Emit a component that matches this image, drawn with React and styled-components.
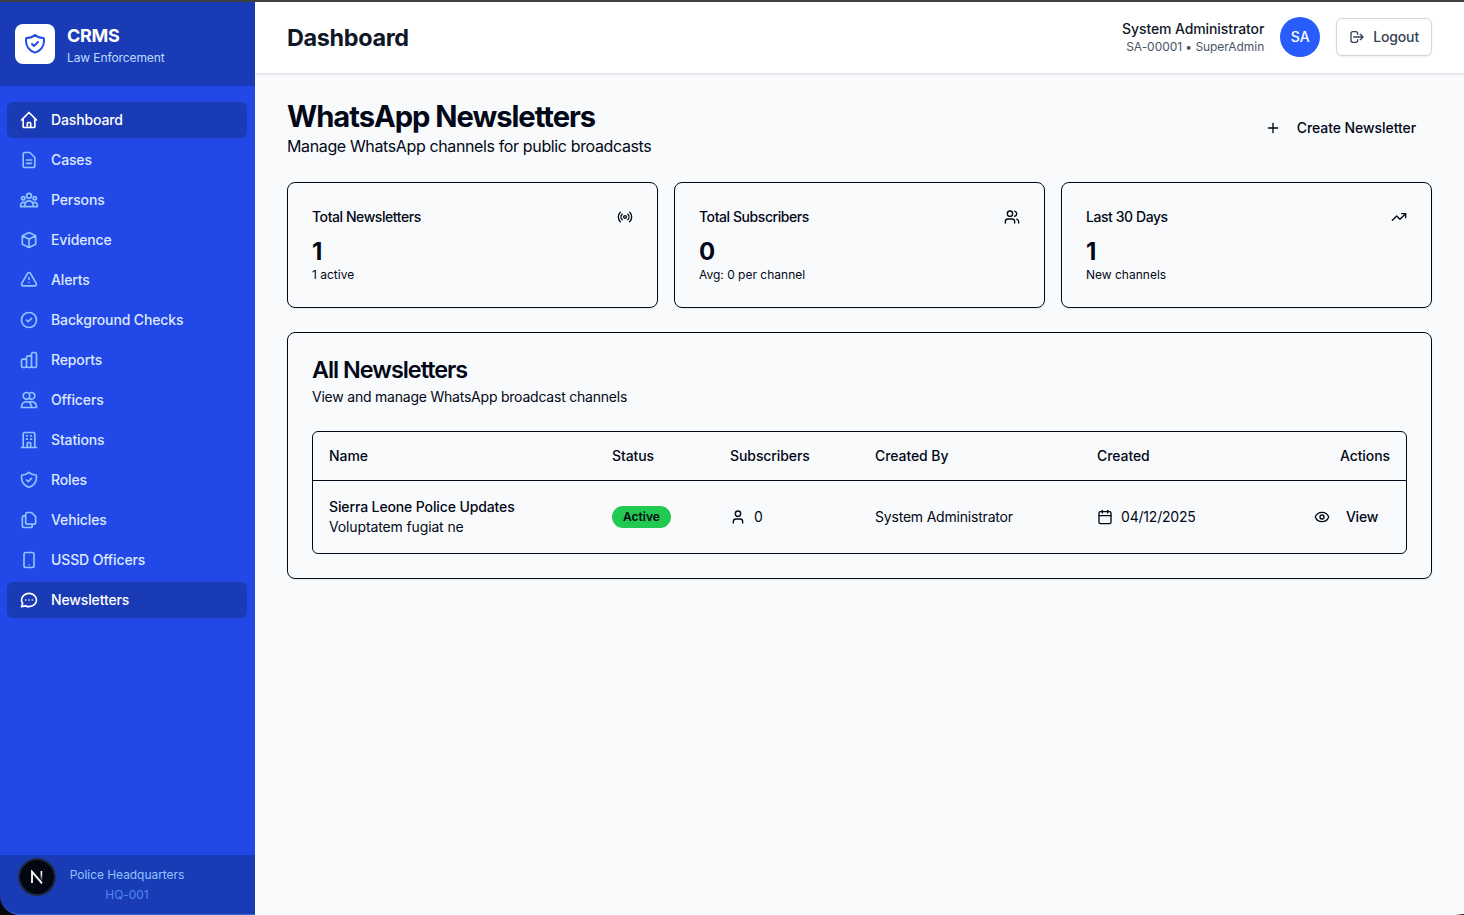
import React from 'react';
import styled, { createGlobalStyle } from 'styled-components';
import {
  HiOutlineHome,
  HiOutlineDocumentText,
  HiOutlineUserGroup,
  HiOutlineCube,
  HiOutlineExclamation,
  HiOutlineCheckCircle,
  HiOutlineChartBar,
  HiOutlineUsers,
  HiOutlineOfficeBuilding,
  HiOutlineShieldCheck,
  HiOutlineDocumentDuplicate,
  HiOutlineDeviceMobile,
  HiOutlineChat,
  HiOutlineLogout,
} from 'react-icons/hi';
import { Radio, Users, TrendingUp, Plus, User, Calendar, Eye } from 'lucide-react';

const COLORS = {
  sidebar: '#2348e8',
  sidebarDark: '#1a3bb6',
  accent: '#285dfc',
  ink: '#020817',
  page: '#f9fafc',
};

const GlobalStyle = createGlobalStyle`
  * {
    box-sizing: border-box;
    margin: 0;
  }
  body {
    background: ${COLORS.page};
    color: ${COLORS.ink};
    font-family: Inter, 'Liberation Sans', sans-serif;
    font-size: 14px;
    line-height: 20px;
    -webkit-font-smoothing: antialiased;
  }
`;

const Shell = styled.div`
  display: flex;
  height: 915px;
  border-top: 2px solid #3d3f42;
  overflow: hidden;
`;

const Sidebar = styled.aside`
  position: relative;
  display: flex;
  flex-direction: column;
  flex: none;
  width: 255px;
  background: ${COLORS.sidebar};
`;

const Brand = styled.div`
  display: flex;
  align-items: center;
  gap: 12px;
  height: 84px;
  padding-left: 15px;
  background: ${COLORS.sidebarDark};
`;

const BrandLogo = styled.div`
  display: flex;
  align-items: center;
  justify-content: center;
  width: 40px;
  height: 40px;
  border-radius: 8px;
  background: white;
  color: ${COLORS.sidebar};
`;

const BrandText = styled.div`
  padding-top: 4px;
`;

const BrandName = styled.h1`
  font-size: 18px;
  line-height: 24px;
  font-weight: 700;
  letter-spacing: -0.3px;
  color: white;
`;

const BrandNote = styled.p`
  font-size: 12px;
  line-height: 20px;
  letter-spacing: -0.1px;
  color: #bedbff;
`;

const Nav = styled.nav`
  display: flex;
  flex: 1;
  flex-direction: column;
  gap: 4px;
  padding: 16px 8px 0 7px;
`;

const NavItem = styled.a`
  display: flex;
  align-items: center;
  gap: 12px;
  height: 36px;
  padding: 0 12px;
  border-radius: 6px;
  font-weight: 500;
  letter-spacing: -0.13px;
  background: ${({ $active }) => ($active ? COLORS.sidebarDark : 'transparent')};
  color: ${({ $active }) => ($active ? 'white' : '#dbeafe')};
  svg {
    color: ${({ $active }) => ($active ? 'white' : '#8ec5ff')};
  }
`;

const FooterWrap = styled.div`
  background: #05070f;
`;

const SidebarFooter = styled.div`
  height: 60px;
  padding: 10px 1px 0 0;
  border-bottom: 1px solid #3c62d0;
  border-bottom-left-radius: 20px;
  background: ${COLORS.sidebarDark};
  font-size: 12px;
  text-align: center;
  letter-spacing: -0.05px;
  color: #8ec5ff;
`;

const StationCode = styled.p`
  color: #5087f5;
`;

const DevBadge = styled.div`
  position: absolute;
  left: 18px;
  bottom: 19px;
  display: flex;
  align-items: center;
  justify-content: center;
  width: 38px;
  height: 38px;
  border: 2px solid #1f2b45;
  border-radius: 50%;
  background: #030711;
`;

const Main = styled.div`
  display: flex;
  flex: 1;
  flex-direction: column;
  background: ${COLORS.page};
`;

const BottomEdge = styled.div`
  height: 1px;
  background: linear-gradient(to right, white calc(100% - 9px), #111);
`;

const Header = styled.header`
  display: flex;
  align-items: center;
  justify-content: space-between;
  height: 72px;
  padding: 0 32px;
  border-bottom: 1px solid #e1e4ec;
  background: white;
  box-shadow: 0 1px 2px rgba(0, 0, 0, 0.08);
`;

const HeaderTitle = styled.h2`
  font-size: 23.4px;
  line-height: 32px;
  font-weight: 700;
  letter-spacing: -0.33px;
  color: #101828;
`;

const Account = styled.div`
  display: flex;
  align-items: center;
  gap: 16px;
  margin-top: -2px;
`;

const AccountText = styled.div`
  text-align: right;
  color: #101828;
  font-weight: 500;
  letter-spacing: -0.1px;
`;

const AccountMeta = styled.p`
  font-size: 12px;
  line-height: 16px;
  font-weight: 400;
  letter-spacing: -0.05px;
  color: #4a5565;
`;

const Avatar = styled.div`
  width: 40px;
  height: 40px;
  border-radius: 50%;
  background: ${COLORS.accent};
  color: white;
  font-weight: 500;
  line-height: 40px;
  text-align: center;
`;

const LogoutButton = styled.button`
  display: flex;
  align-items: center;
  gap: 8px;
  height: 38px;
  padding: 0 12px;
  border: 1px solid #d1d5dc;
  border-radius: 6px;
  background: white;
  box-shadow: 0 1px 2px rgba(0, 0, 0, 0.08);
  color: #364153;
  font: inherit;
  font-weight: 500;
  letter-spacing: -0.15px;
`;

const Content = styled.main`
  display: flex;
  flex: 1;
  flex-direction: column;
  gap: 24px;
  padding: 24px 32px;
`;

const PageHead = styled.div`
  display: flex;
  align-items: center;
  justify-content: space-between;
`;

const PageTitle = styled.h1`
  padding-top: 2px;
  font-size: 29.2px;
  line-height: 34px;
  font-weight: 700;
  letter-spacing: -1.05px;
`;

const PageLead = styled.p`
  font-size: 16px;
  line-height: 24px;
  letter-spacing: -0.37px;
`;

const GhostButton = styled.button`
  display: inline-flex;
  align-items: center;
  gap: 16px;
  height: 36px;
  padding: 0 ${({ $pad }) => $pad}px;
  border: 0;
  background: transparent;
  color: ${COLORS.ink};
  font: inherit;
  font-weight: 500;
  letter-spacing: ${({ $tight }) => ($tight ? '-0.25px' : '-0.07px')};
`;

const Stats = styled.div`
  display: grid;
  grid-template-columns: repeat(3, 1fr);
  gap: 16px;
`;

const Card = styled.section`
  padding: 24px;
  border: 1px solid ${COLORS.ink};
  border-radius: 8px;
  box-shadow: 0 1px 2px rgba(0, 0, 0, 0.08);
`;

const StatHead = styled.div`
  display: flex;
  align-items: center;
  justify-content: space-between;
  padding-bottom: 8px;
  font-weight: 500;
  letter-spacing: -0.43px;
`;

const StatValue = styled.div`
  padding-top: 2px;
  font-size: 24px;
  line-height: 30px;
  font-weight: 700;
`;

const StatNote = styled.p`
  font-size: 12px;
  line-height: 16px;
`;

const CardTitle = styled.h3`
  padding-top: 1px;
  margin-bottom: 5px;
  font-size: 23.4px;
  line-height: 24px;
  font-weight: 600;
  letter-spacing: -1.02px;
`;

const CardLead = styled.p`
  letter-spacing: -0.22px;
`;

const TableFrame = styled.div`
  margin-top: 24px;
  border: 1px solid ${COLORS.ink};
  border-radius: 6px;
`;

const Row = styled.div`
  display: grid;
  grid-template-columns: 283px 118px 145px 222px 1fr 120px;
  align-items: center;
  height: ${({ $head }) => ($head ? 49 : 72)}px;
  border-bottom: ${({ $head }) => ($head ? `1px solid ${COLORS.ink}` : '0')};
  font-weight: ${({ $head }) => ($head ? 500 : 400)};
  letter-spacing: ${({ $head }) => ($head ? '-0.08px' : '-0.2px')};
`;

const Cell = styled.div`
  display: flex;
  align-items: center;
  justify-content: ${({ $end }) => ($end ? 'flex-end' : 'flex-start')};
  gap: 8px;
  padding: 0 16px;
`;

const ChannelName = styled.p`
  font-weight: 500;
  letter-spacing: -0.12px;
`;

const ChannelNote = styled.p`
  letter-spacing: -0.13px;
`;

const StatusPill = styled.span`
  padding: 3px 11px;
  border-radius: 999px;
  background: #22c951;
  font-size: 12px;
  line-height: 16px;
  font-weight: 600;
  letter-spacing: 0;
`;

const navItems = [
  { label: 'Dashboard', icon: HiOutlineHome, active: true },
  { label: 'Cases', icon: HiOutlineDocumentText },
  { label: 'Persons', icon: HiOutlineUserGroup },
  { label: 'Evidence', icon: HiOutlineCube },
  { label: 'Alerts', icon: HiOutlineExclamation },
  { label: 'Background Checks', icon: HiOutlineCheckCircle },
  { label: 'Reports', icon: HiOutlineChartBar },
  { label: 'Officers', icon: HiOutlineUsers },
  { label: 'Stations', icon: HiOutlineOfficeBuilding },
  { label: 'Roles', icon: HiOutlineShieldCheck },
  { label: 'Vehicles', icon: HiOutlineDocumentDuplicate },
  { label: 'USSD Officers', icon: HiOutlineDeviceMobile },
  { label: 'Newsletters', icon: HiOutlineChat, active: true },
];

const stats = [
  { title: 'Total Newsletters', value: '1', note: '1 active', icon: Radio },
  { title: 'Total Subscribers', value: '0', note: 'Avg: 0 per channel', icon: Users },
  { title: 'Last 30 Days', value: '1', note: 'New channels', icon: TrendingUp },
];

const NextMark = () => (
  <svg width="14" height="14" viewBox="0 0 14 14" fill="none" strokeWidth="1.8">
    <defs>
      <linearGradient id="fade" x1="0" y1="0" x2="0" y2="1">
        <stop offset="0.3" stopColor="white" />
        <stop offset="1" stopColor="white" stopOpacity="0.1" />
      </linearGradient>
    </defs>
    <path d="M2 13V1.6L12 13.4" stroke="white" />
    <rect x="10.6" y="1" width="1.6" height="10" fill="url(#fade)" />
  </svg>
);

const App = () => {
  return (
    <Shell>
      <GlobalStyle />
      <Sidebar>
        <Brand>
          <BrandLogo><HiOutlineShieldCheck size={24} /></BrandLogo>
          <BrandText>
            <BrandName>CRMS</BrandName>
            <BrandNote>Law Enforcement</BrandNote>
          </BrandText>
        </Brand>
        <Nav>
          {navItems.map(({ label, icon: Icon, active }) => (
            <NavItem key={label} $active={active}>
              <Icon size={20} />
              {label}
            </NavItem>
          ))}
        </Nav>
        <FooterWrap>
          <SidebarFooter>
            <p>Police Headquarters</p>
            <StationCode>HQ-001</StationCode>
          </SidebarFooter>
        </FooterWrap>
        <DevBadge><NextMark /></DevBadge>
      </Sidebar>

      <Main>
        <Header>
          <HeaderTitle>Dashboard</HeaderTitle>
          <Account>
            <AccountText>
              <p>System Administrator</p>
              <AccountMeta>SA-00001 • SuperAdmin</AccountMeta>
            </AccountText>
            <Avatar>SA</Avatar>
            <LogoutButton>
              <HiOutlineLogout size={16} />
              Logout
            </LogoutButton>
          </Account>
        </Header>

        <Content>
          <PageHead>
            <div>
              <PageTitle>WhatsApp Newsletters</PageTitle>
              <PageLead>Manage WhatsApp channels for public broadcasts</PageLead>
            </div>
            <GhostButton $pad={16}><Plus size={16} />Create Newsletter</GhostButton>
          </PageHead>

          <Stats>
            {stats.map(({ title, value, note, icon: Icon }) => (
              <Card key={title}>
                <StatHead>{title}<Icon size={16} /></StatHead>
                <StatValue>{value}</StatValue>
                <StatNote>{note}</StatNote>
              </Card>
            ))}
          </Stats>

          <Card>
            <CardTitle>All Newsletters</CardTitle>
            <CardLead>View and manage WhatsApp broadcast channels</CardLead>
            <TableFrame>
              <Row $head>
                <Cell>Name</Cell>
                <Cell>Status</Cell>
                <Cell>Subscribers</Cell>
                <Cell>Created By</Cell>
                <Cell>Created</Cell>
                <Cell $end>Actions</Cell>
              </Row>
              <Row>
                <Cell>
                  <div>
                    <ChannelName>Sierra Leone Police Updates</ChannelName>
                    <ChannelNote>Voluptatem fugiat ne</ChannelNote>
                  </div>
                </Cell>
                <Cell><StatusPill>Active</StatusPill></Cell>
                <Cell><User size={16} />0</Cell>
                <Cell>System Administrator</Cell>
                <Cell><Calendar size={16} />04/12/2025</Cell>
                <Cell $end><GhostButton $pad={12} $tight><Eye size={16} />View</GhostButton></Cell>
              </Row>
            </TableFrame>
          </Card>
        </Content>
        <BottomEdge />
      </Main>
    </Shell>
  );
};

export default App;
